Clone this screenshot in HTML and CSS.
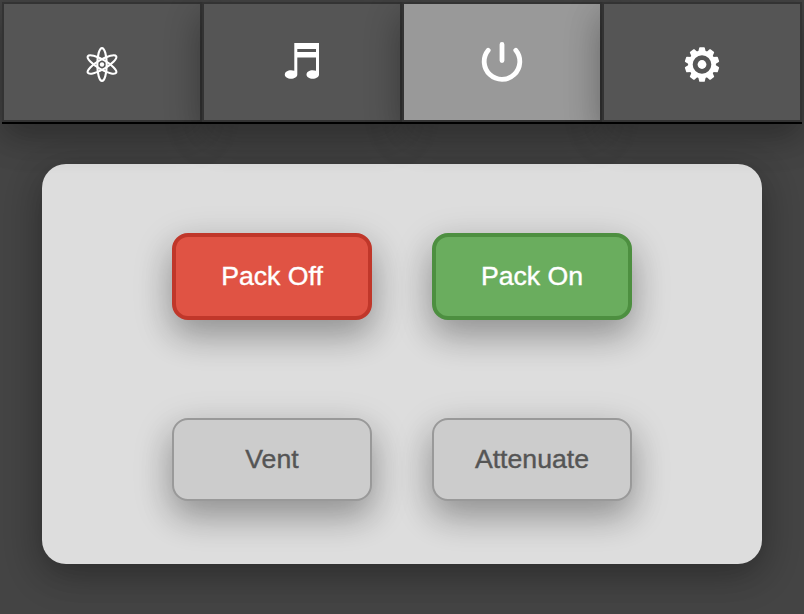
FILE: index.html
```html
<!DOCTYPE html>
<html lang="en">
<head>
<meta charset="utf-8">
<title>Pack Control</title>
<link rel="stylesheet" href="styles.css">
</head>
<body>
<nav class="tabs">
  <button class="tab" aria-label="Stream">
    <svg class="icon" viewBox="0 0 60 60" fill="none" stroke="#fff" stroke-width="2.1">
      <ellipse cx="30" cy="30.5" rx="4.7" ry="16.4"/>
      <ellipse cx="30" cy="30.5" rx="4.7" ry="16.4" transform="rotate(60 30 30.5)"/>
      <ellipse cx="30" cy="30.5" rx="4.7" ry="16.4" transform="rotate(-60 30 30.5)"/>
      <circle cx="30" cy="30.5" r="2.2" fill="#fff" stroke="none"/>
    </svg>
  </button>
  <button class="tab" aria-label="Music">
    <svg class="icon" viewBox="0 0 60 60" fill="#fff">
      <path fill-rule="evenodd" d="M22.3 9H47V40.5C47 43 44 44.8 40.7 44.8S34.5 43 34.5 40.5 37.4 36.2 40.7 36.2Q42.6 36.2 44 36.8V23.5H25.3V40.5C25.3 43 22.3 44.8 19 44.8S12.8 43 12.8 40.5 15.7 36.2 19 36.2Q20.9 36.2 22.3 36.8ZM25.3 15V18H44V15Z"/>
    </svg>
  </button>
  <button class="tab active" aria-label="Power">
    <svg class="icon" viewBox="0 0 60 60" fill="none" stroke="#fff" stroke-width="4.8" stroke-linecap="round">
      <path d="M30 10.4V26.6M16.2 16.3A17.8 17.8 0 1 0 43.8 16.3"/>
    </svg>
  </button>
  <button class="tab" aria-label="Settings">
    <svg class="icon" viewBox="0 0 60 60">
      <circle cx="30" cy="30.5" r="11.6" fill="none" stroke="#fff" stroke-width="4.6"/>
      <circle cx="30" cy="30.5" r="4.4" fill="#fff"/>
      <g fill="#fff">
        <path id="tooth" d="M26.2 18L27.2 13.8Q27.3 13.2 28 13.2H32Q32.7 13.2 32.8 13.8L33.8 18Z"/>
        <use href="#tooth" transform="rotate(36 30 30.5)"/>
        <use href="#tooth" transform="rotate(72 30 30.5)"/>
        <use href="#tooth" transform="rotate(108 30 30.5)"/>
        <use href="#tooth" transform="rotate(144 30 30.5)"/>
        <use href="#tooth" transform="rotate(180 30 30.5)"/>
        <use href="#tooth" transform="rotate(216 30 30.5)"/>
        <use href="#tooth" transform="rotate(252 30 30.5)"/>
        <use href="#tooth" transform="rotate(288 30 30.5)"/>
        <use href="#tooth" transform="rotate(324 30 30.5)"/>
      </g>
    </svg>
  </button>
</nav>
<main class="panel">
  <div class="row">
    <button class="action off">Pack Off</button>
    <button class="action on">Pack On</button>
  </div>
  <div class="row">
    <button class="action">Vent</button>
    <button class="action">Attenuate</button>
  </div>
</main>
</body>
</html>
```
FILE: styles.css
```css
* {
  box-sizing: border-box;
}

body {
  margin: 0;
  padding: 2px;
  height: 614px;
  overflow: hidden;
  background: #444;
  font-family: "Liberation Sans", Arial, sans-serif;
}

.tabs {
  display: grid;
  grid-template-columns: repeat(4, 1fr);
  height: 122px;
  border-bottom: 2px solid #000;
}

.tab {
  display: flex;
  justify-content: center;
  align-items: flex-start;
  padding: 30px 0 0;
  border: 2px solid #333;
  background: #555;
  box-shadow: 0 16px 32px rgba(0, 0, 0, 0.2), 0 12px 40px rgba(0, 0, 0, 0.19);
}

.tab.active {
  background: #999;
}

.icon {
  display: block;
  width: 60px;
  height: 60px;
}

.panel {
  width: 720px;
  height: 400px;
  margin: 40px auto 0;
  padding-top: 69px;
  border-radius: 24px;
  background: #ddd;
  box-shadow: 0 8px 32px rgba(0, 0, 0, 0.2), 0 12px 40px rgba(0, 0, 0, 0.19);
}

.row {
  display: flex;
  justify-content: center;
  gap: 60px;
}

.row + .row {
  margin-top: 98px;
}

.action {
  width: 200px;
  height: 83px;
  padding: 0;
  border: 2px solid #999;
  border-radius: 16px;
  background: #ccc;
  color: #555;
  font: 26.67px "Liberation Sans", Arial, sans-serif;
  -webkit-text-stroke: 0.4px currentColor;
  box-shadow: 0 16px 32px rgba(0, 0, 0, 0.2), 0 12px 40px rgba(0, 0, 0, 0.19);
}

.off,
.on {
  height: 87px;
  border-width: 4px;
  color: #fff;
}

.off {
  border-color: #c0372a;
  background: #e05344;
}

.on {
  border-color: #4d8f40;
  background: #6aad5e;
}
```
